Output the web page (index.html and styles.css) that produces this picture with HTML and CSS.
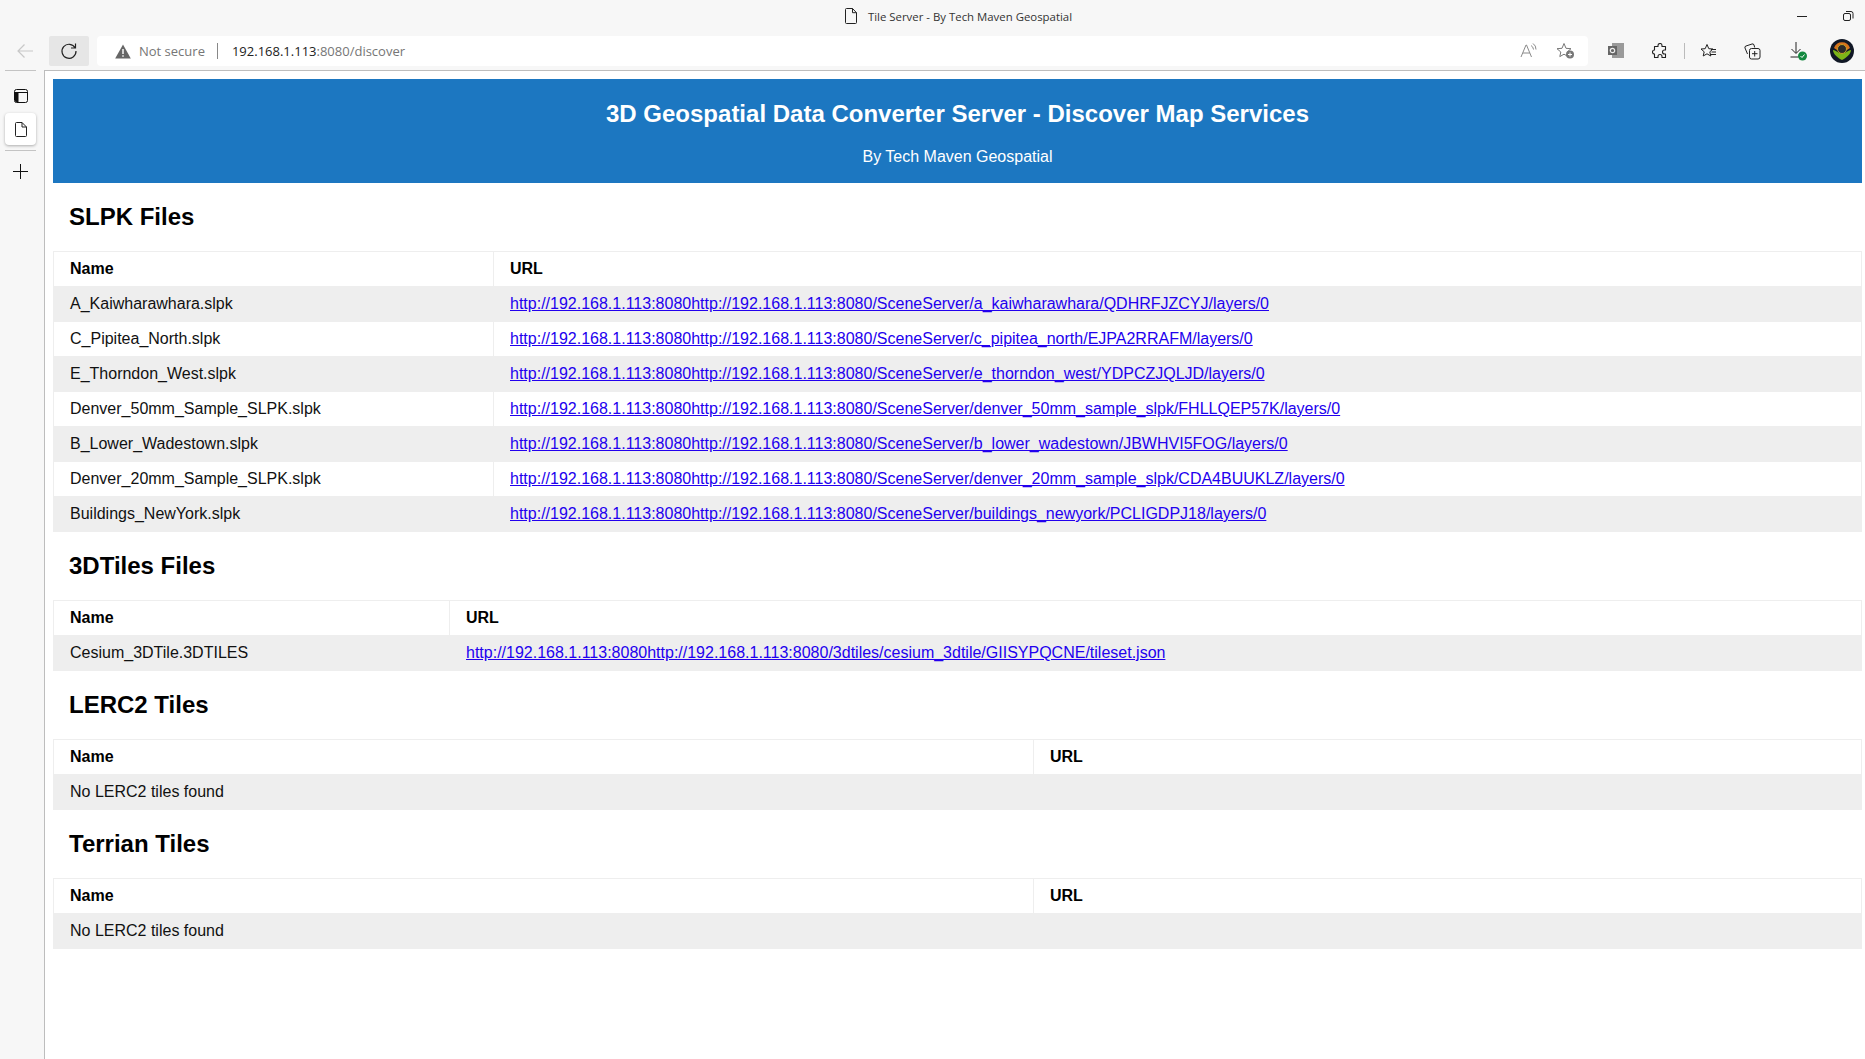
FILE: index.html
```html
<!DOCTYPE html>
<html lang="en">
<head>
<meta charset="utf-8">
<title>Tile Server - By Tech Maven Geospatial</title>
<link rel="stylesheet" href="styles.css">
</head>
<body>
<div class="titlebar">
  <div class="tab-title">
    <svg class="tab-icon" width="14" height="16" viewBox="0 0 14 16"><path d="M1.500 1.500a1 1 0 0 1 1-1h6l4 4.200v9.800a1 1 0 0 1-1 1h-9a1 1 0 0 1-1-1z M8.500 .5v4.200h4" fill="none" stroke="#222" stroke-width="1"/></svg>
    <span>Tile Server - By Tech Maven Geospatial</span>
  </div>
  <div class="window-controls">
    <svg width="14" height="14" viewBox="0 0 14 14"><path d="M2 7.500h10" stroke="#222" stroke-width="1"/></svg>
    <svg width="14" height="14" viewBox="0 0 14 14"><rect x="2.500" y="4.500" width="7" height="7" rx="1.500" fill="none" stroke="#222"/><path d="M5 2.500h5a2 2 0 0 1 2 2v5" fill="none" stroke="#222"/></svg>
  </div>
</div>
<div class="toolbar">
  <div class="nav-back">
    <svg width="18" height="16" viewBox="0 0 18 16"><path d="M17 8H2M8.500 1.500 2 8l6.500 6.500" fill="none" stroke="#c8c8c8" stroke-width="1.200"/></svg>
  </div>
  <div class="nav-reload">
    <svg width="18" height="18" viewBox="0 0 18 18"><path d="M15.200 6A7 7 0 1 0 16 9M15.500 1.500V6H11" fill="none" stroke="#222" stroke-width="1.200"/></svg>
  </div>
  <div class="addressbar">
    <svg class="warn" width="16" height="15" viewBox="0 0 16 15"><path d="M8 .5 15.800 14.500H.2z" fill="#666"/><path d="M8 5v5M8 11.200v1.600" stroke="#f6f6f6" stroke-width="1.500"/></svg>
    <span class="not-secure">Not secure</span>
    <span class="addr-sep"></span>
    <span class="url"><span class="url-host">192.168.1.113</span>:8080/discover</span>
    <span class="addr-spacer"></span>
    <svg class="read-aloud" width="18" height="18" viewBox="0 0 18 18"><path d="M1 15 6 3h.5l5 12M2.800 11h7M11 3.500a5 5 0 0 1 2.500 4M13 1.500a7 7 0 0 1 3 6" fill="none" stroke="#8a8a8a" stroke-width="1"/></svg>
    <svg class="add-fav" width="20" height="18" viewBox="0 0 20 18"><path d="M8 1.500 10 6.300l5 .4-3.800 3.300 1 4.600L8 12.200l-4.200 2.400 1-4.600L1 6.700l5-.4z" fill="none" stroke="#777" stroke-width="1"/><circle cx="14" cy="12.500" r="4" fill="#777"/><path d="M14 10.500v4M12 12.500h4" stroke="#fff"/></svg>
  </div>
  <div class="tools">
    <svg class="outlook" width="16" height="16" viewBox="0 0 16 16"><rect x="4" y="0" width="12" height="15" fill="#9a9a9a"/><rect x="0" y="3" width="9" height="9" fill="#666"/><circle cx="4.500" cy="7.500" r="2.200" fill="none" stroke="#eee" stroke-width="1.200"/></svg>
    <svg class="tool-puzzle" width="16" height="16" viewBox="0 0 16 16"><path d="M6 2.500a2 2 0 0 1 4 0V3.500h3.500V7h-1a2 2 0 0 0 0 4h1v3.500H10v-1a2 2 0 0 0-4 0v1H2.500V11a2 2 0 0 1 0-4V3.500H6z" fill="none" stroke="#222" stroke-width="1.100" stroke-linejoin="round"/></svg>
    <span class="tool-sep"></span>
    <svg class="tool-fav" width="17" height="16" viewBox="0 0 17 16"><path d="M7 1.500 8.800 5.700l4.200.3-3.200 2.800 1 4.200L7 10.800 3.200 13l1-4.200L1 6l4.200-.3z" fill="none" stroke="#222"/><path d="M11 6.500h5M11.500 9h4.500M10 11.500h6" stroke="#222"/></svg>
    <svg class="tool-coll" width="17" height="17" viewBox="0 0 17 17"><rect x="5.500" y="5.500" width="10.500" height="10.500" rx="2" fill="none" stroke="#222"/><path d="M10.700 8v5.500M8 10.700h5.500M3.500 11 1 5a1.500 1.500 0 0 1 1-2L8 1a1.500 1.500 0 0 1 2 1l.7 2.500" fill="none" stroke="#222"/></svg>
    <svg class="tool-dl" width="18" height="20" viewBox="0 0 18 20"><path d="M6 1v11M1.500 8 6 12.500 10.500 8M.5 16h8" fill="none" stroke="#222"/><circle cx="12.500" cy="15" r="4.500" fill="#13893f"/><path d="M10.500 15l1.500 1.500 2.500-3" fill="none" stroke="#fff"/></svg>
    <svg class="tool-avatar" width="24" height="24" viewBox="0 0 24 24"><circle cx="12" cy="12" r="12" fill="#111826"/><path d="M4 9a8.500 8.500 0 0 1 16 0l-3 2a5.500 5.500 0 0 0-10 0z" fill="#d9731c"/><path d="M3 11c3 0 4 3 9 3s6-3 9-3c0 4-5 8-9 10-4-2-9-6-9-10z" fill="#7cb518"/><circle cx="12" cy="10" r="4.500" fill="#2a2a2a" stroke="#c9a227"/></svg>
  </div>
</div>
<div class="window-body">
  <aside class="sidebar">
    <div class="side-top">
      <svg width="14" height="14" viewBox="0 0 14 14"><rect x=".5" y=".5" width="13" height="13" rx="2" fill="none" stroke="#111"/><path d="M.5 3.500h13" stroke="#111"/><path d="M1 3.500h3.500V13H2.500A1.500 1.500 0 0 1 1 11.500z" fill="#111"/></svg>
    </div>
    <div class="side-tab">
      <svg width="12" height="15" viewBox="0 0 12 15"><path d="M.5 1.500a1 1 0 0 1 1-1h5.500l4.500 4.500v8.500a1 1 0 0 1-1 1h-9a1 1 0 0 1-1-1z M7 .5V5h4.500" fill="none" stroke="#222"/></svg>
    </div>
    <div class="side-add">
      <svg width="15" height="15" viewBox="0 0 15 15"><path d="M7.500 0v15M0 7.500h15" stroke="#111" stroke-width="1"/></svg>
    </div>
  </aside>
  <main class="page">
    <header class="banner">
      <h1>3D Geospatial Data Converter Server - Discover Map Services</h1>
      <p>By Tech Maven Geospatial</p>
    </header>

    <h2>SLPK Files</h2>
    <table class="slpk">
      <tr><th>Name</th><th>URL</th></tr>
      <tr><td>A_Kaiwharawhara.slpk</td><td><a href="#">http://192.168.1.113:8080http://192.168.1.113:8080/SceneServer/a_kaiwharawhara/QDHRFJZCYJ/layers/0</a></td></tr>
      <tr><td>C_Pipitea_North.slpk</td><td><a href="#">http://192.168.1.113:8080http://192.168.1.113:8080/SceneServer/c_pipitea_north/EJPA2RRAFM/layers/0</a></td></tr>
      <tr><td>E_Thorndon_West.slpk</td><td><a href="#">http://192.168.1.113:8080http://192.168.1.113:8080/SceneServer/e_thorndon_west/YDPCZJQLJD/layers/0</a></td></tr>
      <tr><td>Denver_50mm_Sample_SLPK.slpk</td><td><a href="#">http://192.168.1.113:8080http://192.168.1.113:8080/SceneServer/denver_50mm_sample_slpk/FHLLQEP57K/layers/0</a></td></tr>
      <tr><td>B_Lower_Wadestown.slpk</td><td><a href="#">http://192.168.1.113:8080http://192.168.1.113:8080/SceneServer/b_lower_wadestown/JBWHVI5FOG/layers/0</a></td></tr>
      <tr><td>Denver_20mm_Sample_SLPK.slpk</td><td><a href="#">http://192.168.1.113:8080http://192.168.1.113:8080/SceneServer/denver_20mm_sample_slpk/CDA4BUUKLZ/layers/0</a></td></tr>
      <tr><td>Buildings_NewYork.slpk</td><td><a href="#">http://192.168.1.113:8080http://192.168.1.113:8080/SceneServer/buildings_newyork/PCLIGDPJ18/layers/0</a></td></tr>
    </table>

    <h2>3DTiles Files</h2>
    <table class="tiles">
      <tr><th>Name</th><th>URL</th></tr>
      <tr><td>Cesium_3DTile.3DTILES</td><td><a href="#">http://192.168.1.113:8080http://192.168.1.113:8080/3dtiles/cesium_3dtile/GIISYPQCNE/tileset.json</a></td></tr>
    </table>

    <h2>LERC2 Tiles</h2>
    <table class="empty">
      <tr><th>Name</th><th>URL</th></tr>
      <tr><td>No LERC2 tiles found</td><td></td></tr>
    </table>

    <h2>Terrian Tiles</h2>
    <table class="empty">
      <tr><th>Name</th><th>URL</th></tr>
      <tr><td>No LERC2 tiles found</td><td></td></tr>
    </table>
  </main>
</div>
</body>
</html>
```

FILE: styles.css
```css
* { box-sizing: border-box; }
html, body { margin: 0; height: 100%; }
body {
  display: flex;
  flex-direction: column;
  height: 1059px;
  overflow: hidden;
  background: #f7f7f7;
  font-family: "Liberation Sans", Arial, sans-serif;
}
.titlebar {
  height: 36px;
  padding-bottom: 4px;
  display: flex;
  align-items: center;
  justify-content: center;
  position: relative;
  flex: none;
}
.tab-title {
  display: flex;
  align-items: center;
  gap: 10px;
  font-family: "Open Sans", sans-serif;
  font-size: 11.4px;
  color: #333;
  margin-left: 51px;
}
.window-controls {
  position: absolute;
  right: 10px;
  top: 9px;
  display: flex;
  gap: 32px;
}
.toolbar {
  height: 30px;
  margin-bottom: 4px;
  display: flex;
  align-items: center;
  flex: none;
}
.nav-back {
  width: 49px;
  display: flex;
  justify-content: center;
}
.nav-reload {
  width: 40px;
  height: 30px;
  background: #e6e6e6;
  border-radius: 2px;
  display: flex;
  align-items: center;
  justify-content: center;
}
.addressbar {
  margin-left: 8px;
  width: 1491px;
  height: 30px;
  background: #fff;
  border-radius: 4px;
  display: flex;
  align-items: center;
  padding-left: 18px;
  font-family: "Open Sans", sans-serif;
  font-size: 13px;
}
.not-secure { color: #767676; margin-left: 8px; }
.addr-sep { width: 1px; height: 16px; background: #888; margin: 0 14px 0 12px; }
.url { color: #767676; }
.url-host { color: #222; }
.addr-spacer { flex: 1; }
.read-aloud { margin-right: 18px; flex: none; }
.add-fav { margin-right: 12px; flex: none; }
.tools {
  flex: 1;
  height: 30px;
  display: flex;
  align-items: center;
  padding-left: 20px;
}
.outlook { margin-right: 28px; flex: none; }
.tool-puzzle { margin-right: 16px; flex: none; }
.tool-sep { width: 1px; height: 16px; background: #bbb; margin-right: 15px; flex: none; }
.tool-fav { margin-right: 27px; flex: none; }
.tool-coll { margin-right: 29px; flex: none; }
.tool-dl { margin-right: 22px; flex: none; }
.tool-avatar { flex: none; }
.window-body {
  flex: 1;
  display: flex;
  min-height: 0;
}
.sidebar {
  width: 44px;
  flex: none;
  display: flex;
  flex-direction: column;
  padding-left: 5px;
}
.side-top {
  width: 31px;
  height: 43px;
  padding-top: 7px;
  display: flex;
  align-items: center;
  justify-content: center;
  border-top: 1px solid #c4c4c4;
}
.side-tab {
  width: 31px;
  height: 32px;
  background: #fff;
  border-radius: 4px;
  box-shadow: 0 1px 3px rgba(0,0,0,.3);
  display: flex;
  align-items: center;
  justify-content: center;
}
.side-add {
  width: 31px;
  height: 41px;
  margin-top: 5px;
  border-top: 1px solid #c4c4c4;
  display: flex;
  align-items: center;
  justify-content: center;
}
.page {
  flex: 1;
  background: #fff;
  border-left: 1px solid #bdbdbd;
  border-top: 1px solid #bdbdbd;
  padding: 8px 3px 0 8px;
  min-width: 0;
}
.banner {
  height: 104px;
  background: #1c77c1;
  color: #fff;
  text-align: center;
  padding-top: 21px;
}
.banner h1 {
  margin: 0;
  font-size: 24px;
  line-height: 28px;
  font-weight: 700;
}
.banner p {
  margin: 20px 0 0;
  font-size: 16px;
  line-height: 18px;
}
h2 {
  margin: 20px 0 20px 16px;
  font-size: 24px;
  line-height: 28px;
  font-weight: 700;
  color: #000;
}
table {
  width: 100%;
  table-layout: fixed;
  border-collapse: collapse;
  font-size: 16px;
  color: #111;
  margin-bottom: 3px;
}
th, td {
  height: 35px;
  padding: 8px 16px;
  text-align: left;
  border: 1px solid #eee;
  line-height: 18px;
}
th { color: #000; }
.slpk th:first-child { width: 440px; }
.tiles th:first-child { width: 396px; }
.empty th:first-child { width: 980px; }
tr:nth-child(even) { background: #eee; }
a { color: #2200ee; }
```
